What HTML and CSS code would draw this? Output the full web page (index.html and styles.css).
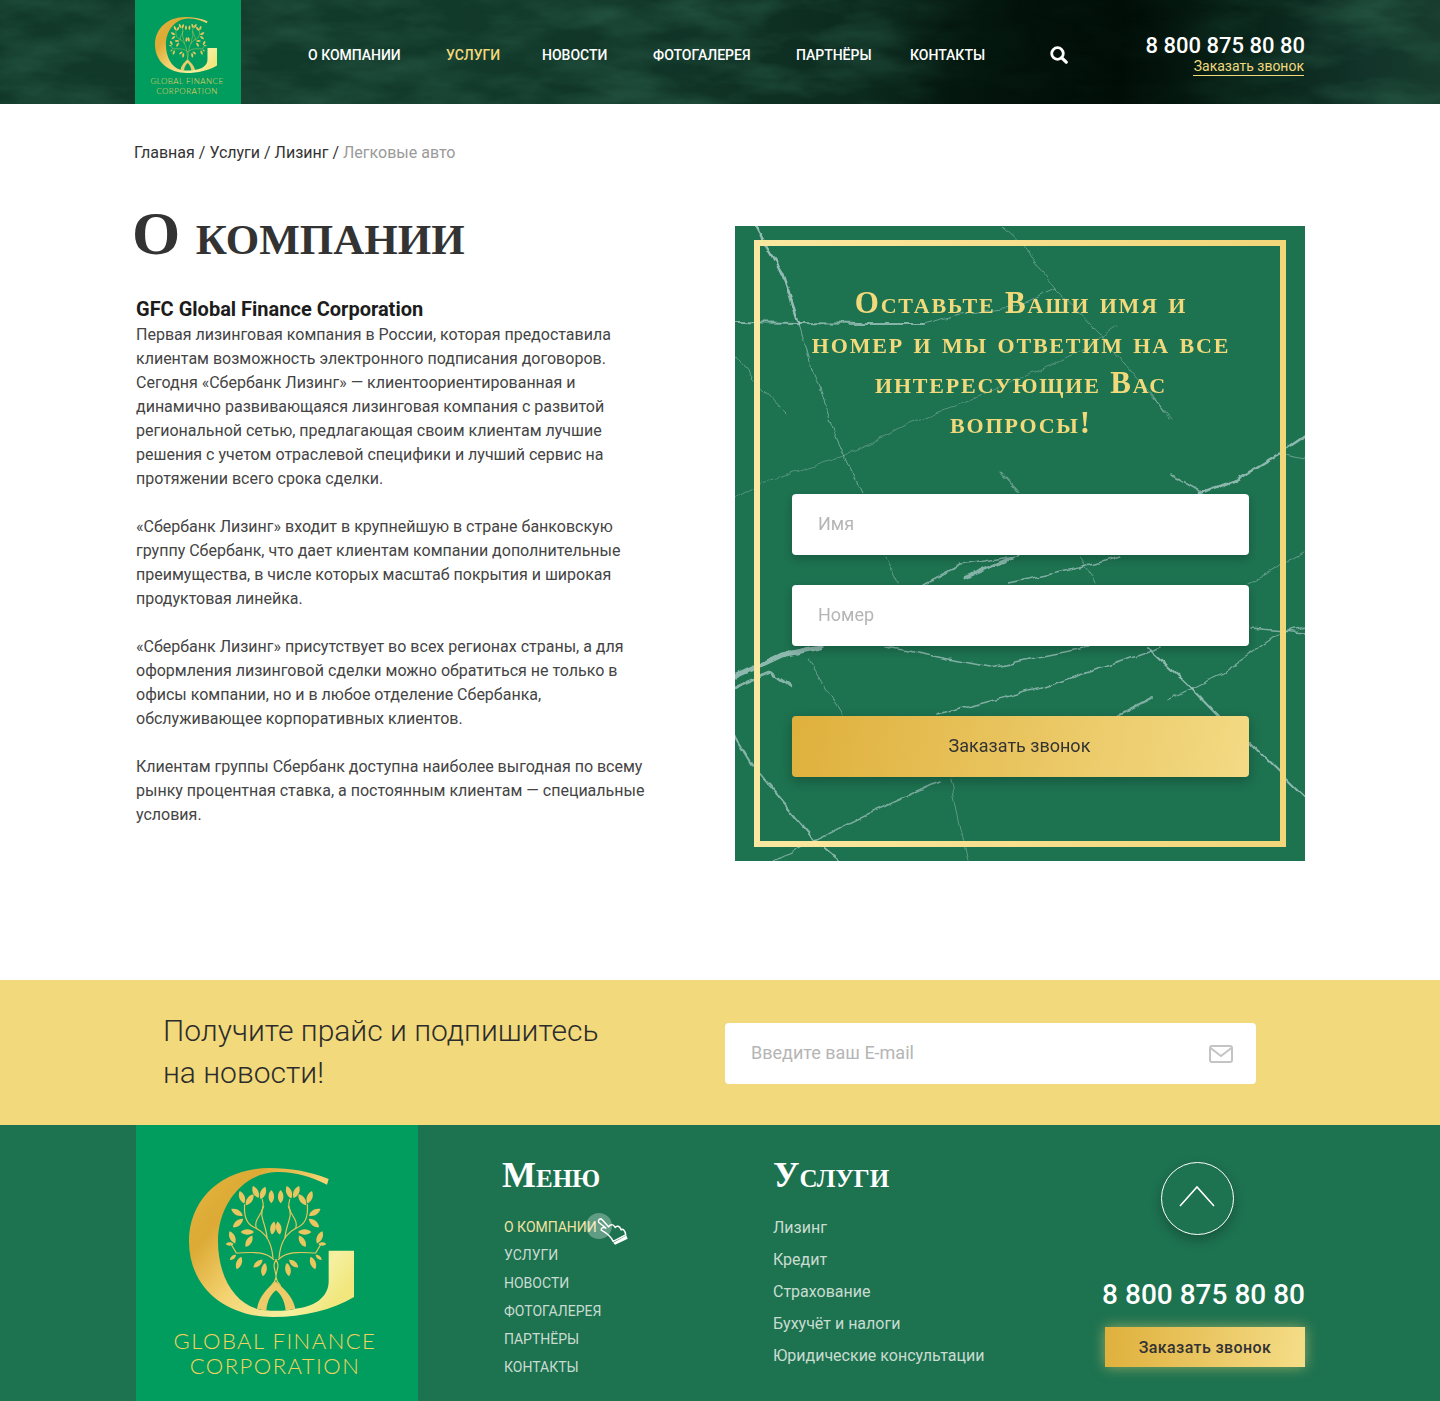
FILE: index.html
```html
<!DOCTYPE html>
<html lang="ru">
<head>
<meta charset="utf-8">
<title>GFC Global Finance Corporation</title>
<link rel="stylesheet" href="styles.css">
</head>
<body>
<svg class="defs" width="0" height="0" aria-hidden="true">
  <defs>
    <linearGradient id="gold" x1="0" y1="0" x2="1" y2="0.75">
      <stop offset="0" stop-color="#e3b63f"/>
      <stop offset="0.28" stop-color="#dcaa35"/>
      <stop offset="0.55" stop-color="#f3d270"/>
      <stop offset="0.85" stop-color="#f5f0a0"/>
      <stop offset="1" stop-color="#f1e77e"/>
    </linearGradient>
    <path id="leaf" d="M0 -20C11 -9 11 9 0 20C-11 9 -11 -9 0 -20Z"/>
    <symbol id="gmark" viewBox="178 130 495 447">
      <path fill="url(#gold)" d="M597 163C540 140 480 130 420 130C280 130 178 220 178 350C178 490 290 577 430 577C520 577 610 555 673 517L673 378L597 378L597 470C597 520 550 548 497 552C470 560 410 560 380 552C310 530 265 450 265 350C265 240 340 145 440 142C490 140 545 155 592 180Z"/>
      <path fill="#eccb68" d="M382 552C388 515 415 490 437 470C460 490 490 515 497 552L468 558C465 525 450 505 439 497C428 505 412 525 410 558Z"/>
      <g fill="none" stroke="#e9c75c" stroke-width="3.5" stroke-linecap="round">
        <path d="M426 482C458 450 418 430 440 405M452 482C420 450 460 430 438 405"/>
        <path d="M430 400C425 345 405 325 378 310C350 300 342 275 345 240"/>
        <path d="M448 400C453 345 473 325 500 310C528 300 536 275 533 240"/>
        <path d="M432 405C405 375 350 385 320 385L305 360M446 405C473 375 528 385 558 385L573 360"/>
        <path d="M380 312C368 280 412 265 398 225M498 312C510 280 466 265 480 225"/>
        <path d="M412 340C410 300 385 270 402 245M466 340C468 300 493 270 476 245"/>
      </g>
      <g fill="#e9c660">
        <use href="#leaf" transform="translate(337 218) rotate(-20)"/>
        <use href="#leaf" transform="translate(360 225) rotate(35)"/>
        <use href="#leaf" transform="translate(378 202) rotate(-25)"/>
        <use href="#leaf" transform="translate(400 205) rotate(20)"/>
        <use href="#leaf" transform="translate(425 216)"/>
        <use href="#leaf" transform="translate(453 216)"/>
        <use href="#leaf" transform="translate(478 203) rotate(-20)"/>
        <use href="#leaf" transform="translate(500 202) rotate(25)"/>
        <use href="#leaf" transform="translate(518 225) rotate(-35)"/>
        <use href="#leaf" transform="translate(540 218) rotate(20)"/>
        <use href="#leaf" transform="translate(322 263) rotate(-60)"/>
        <use href="#leaf" transform="translate(325 295) rotate(50)"/>
        <use href="#leaf" transform="translate(555 263) rotate(60)"/>
        <use href="#leaf" transform="translate(553 295) rotate(-50)"/>
        <use href="#leaf" transform="translate(353 322) rotate(90)"/>
        <use href="#leaf" transform="translate(525 322) rotate(90)"/>
        <use href="#leaf" transform="translate(308 338) rotate(-25)"/>
        <use href="#leaf" transform="translate(358 350) rotate(30)"/>
        <use href="#leaf" transform="translate(518 350) rotate(-30)"/>
        <use href="#leaf" transform="translate(570 338) rotate(25)"/>
        <use href="#leaf" transform="translate(300 358) rotate(90) scale(.6)"/>
        <use href="#leaf" transform="translate(578 358) rotate(90) scale(.6)"/>
        <use href="#leaf" transform="translate(310 398) rotate(50) scale(.6)"/>
        <use href="#leaf" transform="translate(328 415) rotate(20)"/>
        <use href="#leaf" transform="translate(550 415) rotate(-20)"/>
        <use href="#leaf" transform="translate(567 398) rotate(-50) scale(.6)"/>
        <use href="#leaf" transform="translate(385 417) rotate(50) scale(.9)"/>
        <use href="#leaf" transform="translate(403 435) rotate(10)"/>
        <use href="#leaf" transform="translate(475 435) rotate(-10)"/>
        <use href="#leaf" transform="translate(492 417) rotate(-50) scale(.9)"/>
        <use href="#leaf" transform="translate(430 310) rotate(10)"/>
        <use href="#leaf" transform="translate(447 310) rotate(-10)"/>
      </g>
    </symbol>
    <filter id="clouds" x="0" y="0" width="100%" height="100%" color-interpolation-filters="sRGB">
      <feTurbulence type="fractalNoise" baseFrequency="0.012 0.035" numOctaves="4" seed="7"/>
      <feColorMatrix type="matrix" values="0 0 0 0 0.13  0 0 0 0 0.31  0 0 0 0 0.24  2 0 0 0 -0.7"/>
    </filter>
    <filter id="rough" x="-5%" y="-5%" width="110%" height="110%">
      <feTurbulence type="fractalNoise" baseFrequency="0.06" numOctaves="3" seed="4"/>
      <feDisplacementMap in="SourceGraphic" scale="7" xChannelSelector="R" yChannelSelector="G"/>
    </filter>
  </defs>
</svg>

<header class="header">
  <svg class="header-marble" width="1440" height="104" aria-hidden="true"><rect width="1440" height="104" filter="url(#clouds)"/></svg>
  <div class="container header-row">
    <a class="logo logo-small" href="#">
      <svg class="logo-mark"><use href="#gmark"/></svg>
      <span class="logo-text">GLOBAL FINANCE<br>CORPORATION</span>
    </a>
    <nav class="nav">
      <a href="#">О КОМПАНИИ</a>
      <a class="active" href="#">УСЛУГИ</a>
      <a href="#">НОВОСТИ</a>
      <a href="#">ФОТОГАЛЕРЕЯ</a>
      <a href="#">ПАРТНЁРЫ</a>
      <a href="#">КОНТАКТЫ</a>
    </nav>
    <svg class="search" viewBox="0 0 18 18" aria-hidden="true"><circle cx="7.5" cy="7.5" r="5.8" fill="none" stroke="#fff" stroke-width="2.8"/><path d="M11.8 11.8L16.2 16.2" stroke="#fff" stroke-width="3.2" stroke-linecap="round"/></svg>
    <div class="header-contact">
      <div class="header-phone">8 800 875 80 80</div>
      <a class="header-call" href="#">Заказать звонок</a>
    </div>
  </div>
</header>

<main class="container main">
  <div class="breadcrumbs"><a href="#">Главная</a> / <a href="#">Услуги</a> / <a href="#">Лизинг</a> / <span>Легковые авто</span></div>
  <div class="content">
    <section class="article">
      <h1>О компании</h1>
      <div class="article-body">
        <h2>GFC Global Finance Corporation</h2>
        <p>Первая лизинговая компания в России, которая предоставила клиентам возможность электронного подписания договоров. Сегодня «Сбербанк Лизинг» — клиентоориентированная и динамично развивающаяся лизинговая компания с развитой региональной сетью, предлагающая своим клиентам лучшие решения с учетом отраслевой специфики и лучший сервис на протяжении всего срока сделки.</p>
        <p>«Сбербанк Лизинг» входит в крупнейшую в стране банковскую группу Сбербанк, что дает клиентам компании дополнительные преимущества, в числе которых масштаб покрытия и широкая продуктовая линейка.</p>
        <p>«Сбербанк Лизинг» присутствует во всех регионах страны, а для оформления лизинговой сделки можно обратиться не только в офисы компании, но и в любое отделение Сбербанка, обслуживающее корпоративных клиентов.</p>
        <p>Клиентам группы Сбербанк доступна наиболее выгодная по всему рынку процентная ставка, а постоянным клиентам — специальные условия.</p>
      </div>
    </section>
    <aside class="card">
      <svg class="veins" viewBox="0 0 570 635" aria-hidden="true">
        <g filter="url(#rough)" fill="none" stroke="#a9c9c6" stroke-linecap="round" stroke-linejoin="round">
          <path stroke-width="2.4" opacity=".85" d="M20 0L31 20L47 47L64 97"/>
          <path stroke-width="1" opacity=".6" d="M64 97L76 140L102 213L127 267"/>
          <path stroke-width="2" opacity=".75" d="M0 96L64 97L127 98L189 98"/>
          <path stroke-width="1" opacity=".55" d="M189 98L225 88L276 82L320 62"/>
          <path stroke-width="1" opacity=".45" d="M267 0L291 23L320 62L364 107L436 193"/>
          <path stroke-width="2.6" opacity=".8" d="M570 210L545 227L502 253L465 267"/>
          <path stroke-width="1.5" opacity=".7" d="M436 248L465 265"/>
          <path stroke-width="1" opacity=".5" d="M0 130L22 157L51 187"/>
          <path stroke-width="1" opacity=".4" d="M0 273L29 257L109 230L175 197L262 163L342 127L382 100"/>
          <path stroke-width="1.2" opacity=".5" d="M545 228L570 233M265 247L284 267M415 165L433 193"/>
          <path stroke-width="5" opacity=".8" d="M0 451L47 429L85 421"/>
          <path stroke-width="2.5" opacity=".75" d="M0 461L36 446L56 461"/>
          <path stroke-width="1" opacity=".55" d="M73 434L107 489"/>
          <path stroke-width="1.5" opacity=".7" d="M151 421L255 441L353 421"/>
          <path stroke-width="1.6" opacity=".7" d="M202 489L309 461L411 427L425 421"/>
          <path stroke-width="2" opacity=".8" d="M413 422L451 457L484 491"/>
          <path stroke-width="2" opacity=".7" d="M385 489L418 472"/>
          <path stroke-width="1.3" opacity=".65" d="M433 474L487 447L545 407L570 401"/>
          <path stroke-width="1.6" opacity=".7" d="M515 402L570 407"/>
          <path stroke-width="2" opacity=".8" d="M515 517L570 571"/>
          <path stroke-width="2" opacity=".75" d="M0 511L18 541L80 614L105 635"/>
          <path stroke-width="1.400" opacity=".65" d="M40 635L80 614L135 587L204 556"/>
          <path stroke-width="1" opacity=".45" d="M215 552L233 635"/>
          <path stroke-width="1.6" opacity=".7" d="M189 358L225 339L287 329M273 357L345 342L385 331"/>
          <path stroke-width="3" opacity=".75" d="M229 352L276 332"/>
          <path stroke-width="1" opacity=".5" d="M151 331L164 357M345 331L360 357M515 357L570 327"/>
        </g>
      </svg>
      <div class="card-frame">
        <h3 class="card-title">Оставьте Ваши имя и номер и мы ответим на все интересующие Вас вопросы!</h3>
        <form class="card-form">
          <input class="field" type="text" placeholder="Имя">
          <input class="field" type="text" placeholder="Номер">
          <button class="btn-gold" type="button">Заказать звонок</button>
        </form>
      </div>
    </aside>
  </div>
</main>

<section class="subscribe">
  <div class="subscribe-row">
    <p class="subscribe-text">Получите прайс и подпишитесь<br>на новости!</p>
    <div class="subscribe-field">
      <input type="text" placeholder="Введите ваш E-mail">
      <svg class="mail" viewBox="0 0 24 18" aria-hidden="true"><rect x="1" y="1" width="22" height="16" rx="2" fill="none" stroke="#c4c4c4" stroke-width="2"/><path d="M1.5 3L12 11L22.500 3" fill="none" stroke="#c4c4c4" stroke-width="2"/></svg>
    </div>
  </div>
</section>

<footer class="footer">
  <div class="footer-row">
    <a class="logo logo-large" href="#">
      <svg class="logo-mark"><use href="#gmark"/></svg>
      <span class="logo-text">GLOBAL FINANCE<br>CORPORATION</span>
    </a>
    <div class="footer-menu">
      <h4>Меню</h4>
      <ul>
        <li class="current"><a href="#">О КОМПАНИИ</a>
          <span class="touch"></span>
          <svg class="hand" viewBox="320 210 100 95" aria-hidden="true"><path d="M328 234C325 226 333 221 338 226L358 248C362 240 372 238 377 248L378 250C383 243 392 245 396 257C401 253 408 258 410 272L372 292C366 280 355 268 336 258C334 252 342 247 350 252Z" fill="none" stroke="#fff" stroke-width="4.500" stroke-linejoin="round"/><path d="M372 296L412 274L416 284L378 302Z" fill="#fff"/></svg>
        </li>
        <li><a href="#">УСЛУГИ</a></li>
        <li><a href="#">НОВОСТИ</a></li>
        <li><a href="#">ФОТОГАЛЕРЕЯ</a></li>
        <li><a href="#">ПАРТНЁРЫ</a></li>
        <li><a href="#">КОНТАКТЫ</a></li>
      </ul>
    </div>
    <div class="footer-services">
      <h4>Услуги</h4>
      <ul>
        <li><a href="#">Лизинг</a></li>
        <li><a href="#">Кредит</a></li>
        <li><a href="#">Страхование</a></li>
        <li><a href="#">Бухучёт и налоги</a></li>
        <li><a href="#">Юридические консультации</a></li>
      </ul>
    </div>
    <div class="footer-contact">
      <a class="up" href="#"><svg viewBox="0 0 36 22" aria-hidden="true"><path d="M1 21L18 2L35 21" fill="none" stroke="#fff" stroke-width="1.6"/></svg></a>
      <div class="footer-phone">8 800 875 80 80</div>
      <button class="btn-footer" type="button">Заказать звонок</button>
    </div>
  </div>
</footer>
</body>
</html>
```
FILE: styles.css
```css
* { box-sizing: border-box; }
html, body { margin: 0; padding: 0; }
body {
  width: 1440px;
  font-family: Roboto, "Liberation Sans", sans-serif;
  color: #3a3a3a;
  background: #fff;
  font-size: 16px;
  line-height: 24px;
}
a { color: inherit; text-decoration: none; }
ul { list-style: none; margin: 0; padding: 0; }
.defs { position: absolute; }
.container { width: 1170px; margin: 0 auto; }

/* header */
.header {
  position: relative;
  height: 104px;
  overflow: hidden;
  background: linear-gradient(90deg, #113829 0%, #123a2b 30%, #103427 48%, #0c2a1e 60%, #04170e 66%, #010c07 78%, #071f15 85%, #12342a 95%, #183c2e 100%);
}
.header-marble {
  position: absolute;
  left: 0;
  top: 0;
  -webkit-mask-image: linear-gradient(90deg, #000 0%, #000 55%, rgba(0, 0, 0, .1) 68%, rgba(0, 0, 0, .1) 82%, #000 95%);
  mask-image: linear-gradient(90deg, #000 0%, #000 55%, rgba(0, 0, 0, .1) 68%, rgba(0, 0, 0, .1) 82%, #000 95%);
}
.header-row { position: relative; display: flex; align-items: center; height: 104px; }
.logo { display: flex; flex-direction: column; align-items: center; background: #019d5f; color: #f4d35e; font-family: Lato, sans-serif; font-weight: 300; text-align: center; }
.logo-mark { display: block; }
.logo-small { width: 106px; height: 104px; padding-top: 17px; }
.logo-small .logo-mark { width: 62px; height: 56px; margin-left: -4px; }
.logo-small .logo-text { font-size: 8px; line-height: 9.500px; letter-spacing: .5px; margin-top: 4px; margin-left: -2px; }
.nav {
  display: grid;
  grid-template-columns: 138px 96px 111px 143px 114px 85px;
  margin-left: 67px;
  font-size: 14px;
  font-weight: 500;
  color: #fff;
  line-height: 20px;
  margin-top: 5px;
}
.nav .active { color: #f2d97c; }
.search { width: 18px; height: 18px; margin-left: 55px; margin-top: 5px; }
.header-contact { margin-left: auto; text-align: right; margin-top: 6px; }
.header-phone { font-size: 22px; font-weight: 500; color: #fff; line-height: 24px; }
.header-call { display: block; width: 111px; margin: 0 1px 0 auto; white-space: nowrap; font-size: 14px; line-height: 17px; color: #f2d97c; border-bottom: 1px solid #f2d97c; }

/* main */
.main { padding-top: 37px; padding-bottom: 119px; }
.breadcrumbs { color: #333; margin-left: -1px; }
.content { display: flex; justify-content: space-between; margin-top: 37px; }
.breadcrumbs span { color: #9a9a9a; }
.article { width: 530px; }
h1 {
  margin: 0 0 33px -3px;
  font-family: "Liberation Serif", serif;
  font-variant: small-caps;
  font-weight: 700;
  font-size: 62px;
  line-height: 62px;
  color: #333;
  white-space: nowrap;
}
.article-body { padding-left: 1px; width: 521px; color: #444; }
h2 { margin: 0 0 2px; font-size: 20px; font-weight: 700; line-height: 24px; color: #1c1c1c; }
.article-body p { margin: 0 0 24px; }

.card {
  position: relative;
  width: 570px;
  height: 635px;
  margin-top: 24px;
  padding: 14px 19px;
  background: #1d7250;
}
.veins { position: absolute; left: 0; top: 0; width: 570px; height: 635px; }
.card-frame {
  position: relative;
  height: 607px;
  padding: 37px 31px 0 32px;
  border: 6px solid #f2d97c;
  border-image: linear-gradient(90deg, #fbe8a0, #f1d67a) 1;
  text-align: center;
}
.card-title {
  margin: 0 -1px 0 0;
  font-family: "Liberation Serif", serif;
  font-variant: small-caps;
  font-weight: 700;
  font-size: 31px;
  line-height: 40px;
  letter-spacing: 1.8px;
  color: #f2d97c;
  padding: 0 16px;
}
.card-form { display: flex; flex-direction: column; margin-top: 51px; }
.field {
  height: 61px;
  padding: 0 26px 2px;
  border: 0;
  border-radius: 4px;
  background: #fff;
  font: 18px Roboto, sans-serif;
  box-shadow: 0 4px 8px rgba(0, 0, 0, .2);
  margin-bottom: 30px;
}
.field::placeholder, .subscribe-field input::placeholder { color: #b5b5b5; opacity: 1; }
.btn-gold {
  height: 61px;
  margin-top: 40px;
  padding: 0 2px 2px 0;
  border: 0;
  border-radius: 4px;
  background: linear-gradient(100deg, #dfb03c 0%, #f3da84 100%);
  font: 18px Roboto, sans-serif;
  color: #333;
  box-shadow: 0 4px 12px rgba(0, 0, 0, .25);
}

/* subscribe */
.subscribe { height: 145px; background: #f2d97c; }
.subscribe-row { display: flex; padding: 30px 184px 0 163px; justify-content: space-between; }
.subscribe-text { margin: 0; font-size: 30px; font-weight: 300; line-height: 42px; color: #2c2c2c; }
.subscribe-field {
  display: flex;
  align-items: center;
  width: 531px;
  height: 61px;
  margin-top: 13px;
  padding: 0 23px 0 26px;
  background: #fff;
  border-radius: 4px;
}
.subscribe-field input { flex: 1; min-width: 0; border: 0; outline: 0; padding: 0 0 2px; background: transparent; font: 18px Roboto, sans-serif; }
.mail { width: 24px; height: 18px; flex: none; }

/* footer */
.footer { height: 276px; background: #1d7250; color: #fff; }
.footer-row { display: flex; height: 276px; padding-left: 136px; padding-right: 135px; }
.logo-large { flex: none; width: 282px; height: 276px; padding-top: 43px; }
.logo-large .logo-mark { width: 165px; height: 149px; margin-left: -11px; }
.logo-large .logo-text { font-size: 22px; line-height: 25px; letter-spacing: 1.5px; margin-top: 11px; margin-left: -4px; }
.footer h4 {
  margin: 0;
  font-family: "Liberation Serif", serif;
  font-variant: small-caps;
  font-weight: 700;
  font-size: 36px;
  line-height: 40px;
}
.footer-menu { flex: none; width: 271px; margin-left: 84px; padding-top: 30px; }
.footer-menu ul { margin: 18px 0 0 2px; font-size: 14px; line-height: 28px; color: #c9dcd0; }
.footer-menu li { position: relative; }
.footer-menu .current { color: #f3e3a0; }
.touch { position: absolute; left: 82px; top: 0; width: 26px; height: 26px; border-radius: 50%; background: rgba(255, 255, 255, .3); }
.hand { position: absolute; left: 92px; top: 1px; width: 33px; height: 32px; }
.footer-services { flex: none; padding-top: 30px; }
.footer-services ul { margin-top: 17px; line-height: 32px; color: #c9dcd0; }
.footer-contact { margin-left: auto; display: flex; flex-direction: column; align-items: flex-end; padding-top: 37px; }
.up {
  display: flex;
  align-items: center;
  justify-content: center;
  width: 73px;
  height: 73px;
  margin-right: 71px;
  border: 1.500px solid #fff;
  border-radius: 50%;
  box-shadow: 0 5px 12px rgba(0, 0, 0, .25);
}
.up svg { width: 36px; height: 22px; margin: -6px 2px 0 0; }
.footer-phone { margin-top: 42px; font-size: 28px; font-weight: 500; line-height: 36px; white-space: nowrap; }
.btn-footer {
  width: 200px;
  height: 40px;
  margin-top: 14px;
  border: 0;
  background: linear-gradient(95deg, #dfb03c 0%, #f5dd88 100%);
  font: 500 16px Roboto, sans-serif;
  letter-spacing: .4px;
  color: #333;
  box-shadow: 0 0 14px rgba(242, 217, 124, .55);
}
```
